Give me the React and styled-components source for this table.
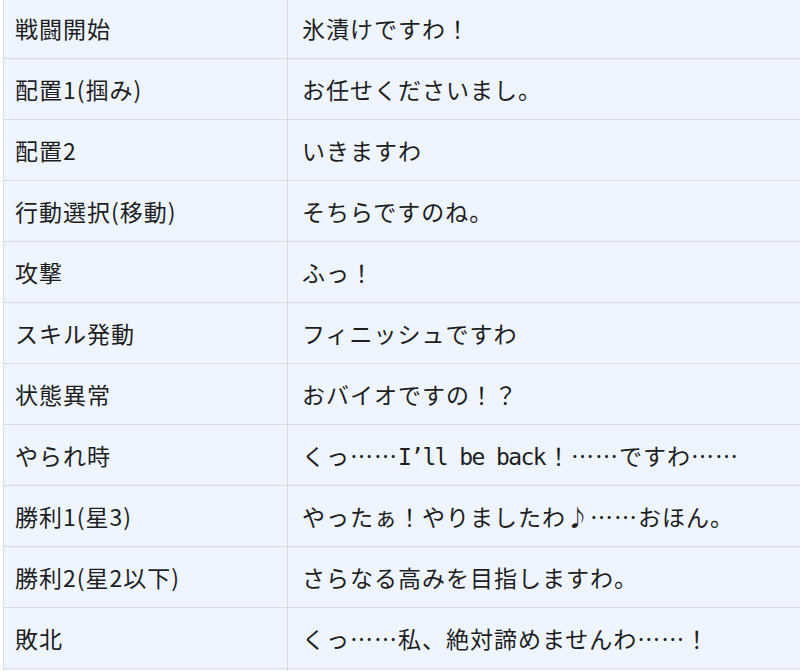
import styled, { createGlobalStyle } from "styled-components";

const GlobalStyle = createGlobalStyle`
    html, body {
        margin: 0;
        padding: 0;
        background: #ffffff;
    }
    body {
        font-family: "Noto Sans CJK JP", "Noto Sans", sans-serif;
        color: #1e1e1e;
    }
`

const Wrapper = styled.div`
    width: 800px;
    height: 671px;
    overflow: hidden;
    padding-left: 3px;
    box-sizing: border-box;
`

const Table = styled.table`
    border-collapse: collapse;
    width: 820px;
    margin-top: -3px;
    background: #eef5fe;
`

const Row = styled.tr`
    height: 61px;
`

const Cell = styled.td`
    border: 1px solid #d8dce2;
    padding: 0 0 0 ${props => props.$wide ? 14 : 11}px;
    font-size: 23px;
    letter-spacing: 1px;
    vertical-align: middle;
    width: ${props => props.$wide ? "auto" : "272px"};
    white-space: nowrap;
`

const Latin = styled.span`
    font-family: "DejaVu Sans Mono", monospace;
    font-size: 23px;
    letter-spacing: -1.6px;
    margin-right: 2px;
`

const Dots = styled.span`
    font-family: "Noto Sans CJK JP", sans-serif;
`

const lines = [
    ["戦闘開始", "氷漬けですわ！"],
    ["配置1(掴み)", "お任せくださいまし。"],
    ["配置2", "いきますわ"],
    ["行動選択(移動)", "そちらですのね。"],
    ["攻撃", "ふっ！"],
    ["スキル発動", "フィニッシュですわ"],
    ["状態異常", "おバイオですの！？"],
    ["やられ時", <>くっ……<Latin>I’ll be back</Latin>！<Dots>……</Dots>ですわ……</>],
    ["勝利1(星3)", "やったぁ！やりましたわ♪……おほん。"],
    ["勝利2(星2以下)", "さらなる高みを目指しますわ。"],
    ["敗北", "くっ……私、絶対諦めませんわ……！"],
    ["", ""],
]

const App = () => {
    return (
        <Wrapper lang="ja">
            <GlobalStyle />
            <Table>
                <tbody>
                    {lines.map(([scene, voice], i) => (
                        <Row key={i}>
                            <Cell>{scene}</Cell>
                            <Cell $wide>{voice}</Cell>
                        </Row>
                    ))}
                </tbody>
            </Table>
        </Wrapper>
    )
}

export default App;
